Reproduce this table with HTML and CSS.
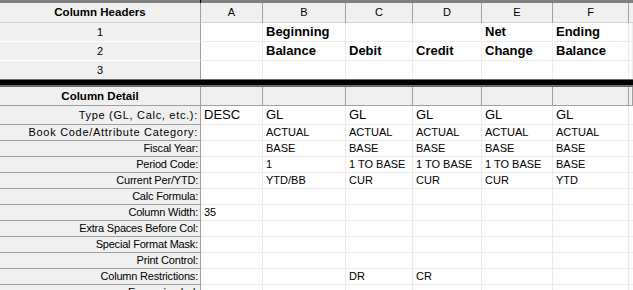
FILE: index.html
```html
<!DOCTYPE html>
<html>
<head>
<meta charset="utf-8">
<link rel="stylesheet" href="styles.css">
</head>
<body>
<div class="sheet">
  <div class="topband"></div>
  <div class="row colhdr">
    <div class="c lab bold">Column Headers</div>
    <div class="c">A</div><div class="c">B</div><div class="c">C</div><div class="c">D</div><div class="c">E</div><div class="c">F</div><div class="c fill"></div>
  </div>
  <div class="row hrow">
    <div class="c lab">1</div>
    <div class="c d"></div><div class="c d b">Beginning</div><div class="c d"></div><div class="c d"></div><div class="c d b">Net</div><div class="c d b">Ending</div><div class="c d fill"></div>
  </div>
  <div class="row hrow">
    <div class="c lab">2</div>
    <div class="c d"></div><div class="c d b">Balance</div><div class="c d b">Debit</div><div class="c d b">Credit</div><div class="c d b">Change</div><div class="c d b">Balance</div><div class="c d fill"></div>
  </div>
  <div class="row hrow last">
    <div class="c lab">3</div>
    <div class="c d"></div><div class="c d"></div><div class="c d"></div><div class="c d"></div><div class="c d"></div><div class="c d"></div><div class="c d fill"></div>
  </div>
  <div class="sep"></div>
  <div class="row dethdr">
    <div class="c lab bold">Column Detail</div>
    <div class="c"></div><div class="c"></div><div class="c"></div><div class="c"></div><div class="c"></div><div class="c"></div><div class="c fill"></div>
  </div>
  <div class="row drow type">
    <div class="c lab wide">Type (GL, Calc, etc.):</div>
    <div class="c d">DESC</div><div class="c d">GL</div><div class="c d">GL</div><div class="c d">GL</div><div class="c d">GL</div><div class="c d">GL</div><div class="c d fill"></div>
  </div>
  <div class="row drow">
    <div class="c lab wide">Book Code/Attribute Category:</div>
    <div class="c d"></div><div class="c d">ACTUAL</div><div class="c d">ACTUAL</div><div class="c d">ACTUAL</div><div class="c d">ACTUAL</div><div class="c d">ACTUAL</div><div class="c d fill"></div>
  </div>
  <div class="row drow">
    <div class="c lab">Fiscal Year:</div>
    <div class="c d"></div><div class="c d">BASE</div><div class="c d">BASE</div><div class="c d">BASE</div><div class="c d">BASE</div><div class="c d">BASE</div><div class="c d fill"></div>
  </div>
  <div class="row drow">
    <div class="c lab">Period Code:</div>
    <div class="c d"></div><div class="c d">1</div><div class="c d">1 TO BASE</div><div class="c d">1 TO BASE</div><div class="c d">1 TO BASE</div><div class="c d">BASE</div><div class="c d fill"></div>
  </div>
  <div class="row drow">
    <div class="c lab">Current Per/YTD:</div>
    <div class="c d"></div><div class="c d">YTD/BB</div><div class="c d">CUR</div><div class="c d">CUR</div><div class="c d">CUR</div><div class="c d">YTD</div><div class="c d fill"></div>
  </div>
  <div class="row drow">
    <div class="c lab">Calc Formula:</div>
    <div class="c d"></div><div class="c d"></div><div class="c d"></div><div class="c d"></div><div class="c d"></div><div class="c d"></div><div class="c d fill"></div>
  </div>
  <div class="row drow">
    <div class="c lab">Column Width:</div>
    <div class="c d">35</div><div class="c d"></div><div class="c d"></div><div class="c d"></div><div class="c d"></div><div class="c d"></div><div class="c d fill"></div>
  </div>
  <div class="row drow">
    <div class="c lab">Extra Spaces Before Col:</div>
    <div class="c d"></div><div class="c d"></div><div class="c d"></div><div class="c d"></div><div class="c d"></div><div class="c d"></div><div class="c d fill"></div>
  </div>
  <div class="row drow">
    <div class="c lab">Special Format Mask:</div>
    <div class="c d"></div><div class="c d"></div><div class="c d"></div><div class="c d"></div><div class="c d"></div><div class="c d"></div><div class="c d fill"></div>
  </div>
  <div class="row drow">
    <div class="c lab">Print Control:</div>
    <div class="c d"></div><div class="c d"></div><div class="c d"></div><div class="c d"></div><div class="c d"></div><div class="c d"></div><div class="c d fill"></div>
  </div>
  <div class="row drow">
    <div class="c lab">Column Restrictions:</div>
    <div class="c d"></div><div class="c d"></div><div class="c d">DR</div><div class="c d">CR</div><div class="c d"></div><div class="c d"></div><div class="c d fill"></div>
  </div>
  <div class="row drow">
    <div class="c lab">Expansion Ind:</div>
    <div class="c d"></div><div class="c d"></div><div class="c d"></div><div class="c d"></div><div class="c d"></div><div class="c d"></div><div class="c d fill"></div>
  </div>
</div>
</body>
</html>
```

FILE: styles.css
```css
html, body {
  margin: 0;
  padding: 0;
  background: #ffffff;
  overflow: hidden;
}
.sheet {
  width: 633px;
  height: 290px;
  overflow: hidden;
  font-family: "Liberation Sans", Arial, sans-serif;
  font-size: 11px;
  color: #000;
}
.topband {
  height: 3px;
  background: linear-gradient(to right, #808080 200px, #000 200px 201px, #808080 201px);
}
.row {
  display: grid;
  grid-template-columns: 201px 62px 83px 67px 69px 71px 76px 1fr;
}
.c {
  box-sizing: border-box;
  border-right: 1px solid #a0a0a0;
  border-bottom: 1px solid #a0a0a0;
  white-space: nowrap;
  overflow: hidden;
}
.bold {
  font-weight: bold;
  font-size: 11.5px;
}
.colhdr { height: 20px; }
.colhdr .c {
  background: #f0f0f0;
  text-align: center;
  line-height: 19px;
  border-bottom-color: #d4d4d4;
}
.colhdr .fill { border-right: none; }
.hrow { height: 19px; }
.hrow .lab {
  background: #f0f0f0;
  text-align: center;
  line-height: 18px;
  border-bottom-color: #ffffff;
}
.hrow .d {
  background: #fff;
  border-color: #ececec;
  padding-left: 3px;
  line-height: 18px;
  font-size: 13px;
}
.hrow .d.b { font-weight: bold; }
.hrow.last { height: 18px; }
.hrow.last .c { border-bottom: none; }
.sep {
  height: 8px;
  box-sizing: border-box;
  background: #000;
  border-top: 1px solid #6a6a6a;
  border-bottom: 2px solid #6a6a6a;
}
.dethdr { height: 19px; }
.dethdr .c {
  background: #f0f0f0;
  text-align: center;
  line-height: 18px;
}
.drow { height: 16px; }
.drow .lab {
  background: #f0f0f0;
  text-align: right;
  padding-right: 2px;
  line-height: 15px;
  letter-spacing: -0.2px;
}
.drow .lab.wide { letter-spacing: 0.7px; }
.drow .d {
  background: #fff;
  border-color: #ebebeb;
  padding-left: 3px;
  line-height: 15px;
}
.drow .fill { border-right: none; }
.drow.type { height: 19px; }
.drow.type .c { line-height: 18px; }
.drow.type .d { font-size: 13px; }
```
